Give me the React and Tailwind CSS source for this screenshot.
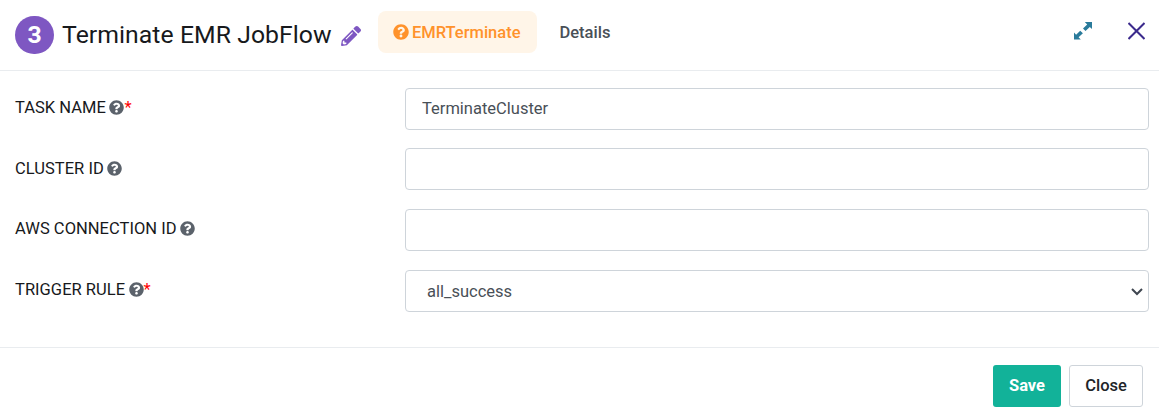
import React from "react";
import { FaQuestionCircle, FaPencilAlt } from "react-icons/fa";

const inputClass =
  "block h-[42px] w-[744px] rounded border border-[#ced4da] bg-white text-[16.5px] text-[#495057] outline-none";

function Field({ label, required, className, labelClass = "h-10", children }) {
  return (
    <div className={`flex items-start ${className}`}>
      <label
        className={`flex w-[390px] items-center text-[16.5px] tracking-[0.03px] whitespace-nowrap text-[#17191c] ${labelClass}`}
      >
        {label}
        <FaQuestionCircle className="mb-[2px] ml-[3.5px] size-[15px] text-[#5b626b]" />
        {required && <span className="text-[#ff0000]">*</span>}
      </label>
      {children}
    </div>
  );
}

function ExpandIcon() {
  return (
    <svg width="18" height="18" viewBox="0 0 18 18" fill="#2a7b9b">
      <path d="M10.8 0H18V7L15.8 4.9L11.5 9L9 6.6L13.2 2.5Z" />
      <path d="M0 10.5L2.1 12.8L6.2 8.8L8.9 11.3L4.6 15.3L6.8 17.5H0Z" />
    </svg>
  );
}

export default function App() {
  return (
    <div className="h-[419px] w-[1159px] overflow-hidden bg-white font-['Roboto',sans-serif]">
      <header className="flex h-[71px] items-start border-b border-[#e9ecef] pl-[15px]">
        <span className="mt-4 flex h-[38px] w-[39px] items-center justify-center rounded-full bg-[#7e57c2] text-[24.75px] leading-[38px] font-bold text-white">
          3
        </span>
        <h1 className="mt-4 ml-2 w-[271px] text-[24.75px] leading-[38px] tracking-[0.06px] whitespace-nowrap text-[#17191c]">
          Terminate EMR JobFlow
        </h1>
        <FaPencilAlt className="mt-[26px] ml-2 size-5 text-[#7e57c2]" />
        <nav className="mt-[11px] ml-[17px] flex text-[16.5px] font-medium">
          <a className="flex h-[42px] w-[159px] items-center rounded-lg bg-[#fff5e8] pl-[15px] text-[#ff922b]">
            <FaQuestionCircle className="mr-[3px] size-4" />
            <span className="pt-[2px]">EMRTerminate</span>
          </a>
          <a className="flex h-[42px] items-center pt-[2px] pl-[22.5px] text-[#495057]">Details</a>
        </nav>
        <div className="mt-[22px] mr-[14px] ml-auto flex gap-9">
          <ExpandIcon />
          <svg width="17" height="18" viewBox="0 0 17 18" stroke="#3b2a8c" strokeWidth="2">
            <path d="M0.5 1L16.5 17M16.5 1L0.5 17" />
          </svg>
        </div>
      </header>

      <main className="h-[276px] pt-[17px] pl-[15px]">
        <Field label="TASK NAME" required className="h-[60px]">
          <input className={`${inputClass} px-4 pb-[2px]`} defaultValue="TerminateCluster" />
        </Field>
        <Field label="CLUSTER ID" className="h-[61px]" labelClass="h-[42px]">
          <input className={`${inputClass} px-4`} />
        </Field>
        <Field label="AWS CONNECTION ID" className="h-[61px]">
          <input className={`${inputClass} px-4`} />
        </Field>
        <Field label="TRIGGER RULE" required className="h-[42px]">
          <div className={`${inputClass} flex items-center justify-between pr-[5px] pl-[21px]`}>
            <span className="pt-[3px]">all_success</span>
            <svg className="mt-[2px]" width="12" height="8" viewBox="0 0 12 8" fill="none" stroke="#3f4650" strokeWidth="2">
              <path d="M1 1L6 6L11 1" />
            </svg>
          </div>
        </Field>
      </main>

      <footer className="flex h-[72px] justify-end gap-2 border-t border-[#e9ecef] pt-[17px] pr-4 text-[16.5px] font-medium">
        <button className="h-[42px] w-[68px] rounded-[3px] bg-[#12b299] font-bold text-white">Save</button>
        <button className="h-[42px] w-[74px] rounded-[3px] border border-[#ced4da] bg-white text-[#212529]">
          Close
        </button>
      </footer>
    </div>
  );
}
